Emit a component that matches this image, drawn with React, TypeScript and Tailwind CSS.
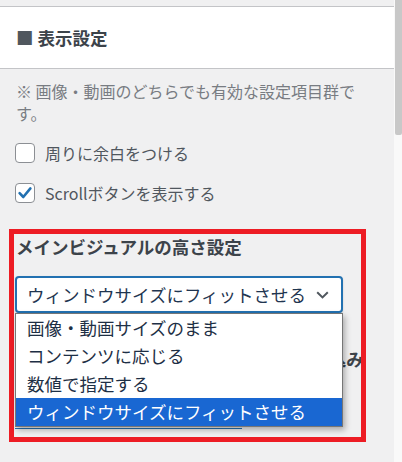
import React from "react";

const jp = "font-['Noto_Sans_CJK_JP',sans-serif]";

const options = [
  "画像・動画サイズのまま",
  "コンテンツに応じる",
  "数値で指定する",
  "ウィンドウサイズにフィットさせる",
];

const Checkbox = ({ checked, label }: { checked?: boolean; label: string }) => (
  <label className="flex items-center h-[20px]">
    <span className="w-[20px] h-[20px] ml-[15px] rounded-[4px] border border-[#8c8f94] bg-white flex items-center justify-center">
      {checked && (
        <svg width="16" height="16" viewBox="0 0 16 16">
          <path d="M2.6 8.2 L6.3 12 L13.4 3.4" fill="none" stroke="#2271b1" strokeWidth="2.6" strokeLinecap="round" strokeLinejoin="round" />
        </svg>
      )}
    </span>
    <span className="ml-[10px] text-[16px] text-[#50575e] leading-[20px]">{label}</span>
  </label>
);

export default function App() {
  const selected = 3;

  return (
    <div className={`w-[402px] h-[462px] bg-[#f0f0f1] flex overflow-hidden ${jp}`}>
      <div className="w-[394px] shrink-0">
        <div className="h-[6px]" />
        <div className="h-[63px] bg-white border-y border-[#c3c4c7] flex items-center pl-[16px]">
          <h2 className="text-[17.5px] font-bold text-[#3c434a] leading-[26px]">
            <span className="text-[#50575e]">■</span> 表示設定
          </h2>
        </div>

        <p className="mt-[11px] ml-[16px] w-[350px] text-[16px] leading-[22px] text-[#787c82]">
          ※ 画像・動画のどちらでも有効な設定項目群です。
        </p>

        <div className="mt-[19px] flex flex-col gap-[20px]">
          <Checkbox label="周りに余白をつける" />
          <Checkbox checked label="Scrollボタンを表示する" />
        </div>

        {/* 赤枠 */}
        <div className="mt-[26px] ml-[9px] w-[357px] border-[5px] border-[#ed1c24] pl-[1px] pb-[8px]">
          <h3 className="pl-[1px] text-[17.5px] font-bold text-[#3c434a] leading-[26px]">
            メインビジュアルの高さ設定
          </h3>

          <div className="relative mt-[16px] w-[328px]">
            <div className="h-[37px] rounded-[4px] border-2 border-[#2271b1] bg-white shadow-[0_1px_2px_rgba(0,0,0,0.15)] flex items-center pl-[10px] pr-[10px]">
              <span className="grow text-[17.5px] text-[#1f3550] leading-[24px] whitespace-nowrap">
                {options[selected]}
              </span>
              <svg width="13" height="8" viewBox="0 0 13 8" className="mr-[2px]">
                <path d="M1.2 1.2 L6.5 6.4 L11.8 1.2" fill="none" stroke="#50575e" strokeWidth="2" />
              </svg>
            </div>

            {/* 開いたドロップダウン */}
            <ul className="absolute z-10 left-0 top-[37px] w-[328px] bg-white border border-[#767676] shadow-[2px_3px_6px_rgba(0,0,0,0.3)]">
              {options.map((o, i) => (
                <li
                  key={o}
                  className={
                    i === selected
                      ? "h-[28px] pl-[11px] flex items-center text-[17.5px] text-white bg-[#1967d2] whitespace-nowrap"
                      : "h-[28px] pl-[11px] flex items-center text-[17.5px] text-[#1e2f45] whitespace-nowrap"
                  }
                >
                  {o}
                </li>
              ))}
            </ul>
          </div>

          <div className="mt-[33px] pl-[1px] h-[26px] text-[17.5px] font-bold text-[#3c434a] leading-[26px] whitespace-nowrap overflow-hidden">
            スマホでのメインビジュアル画像の読み込み
          </div>
          <div className="mt-[15px] w-[227px] h-[42px] border-b border-[#2271b1]" />
        </div>
      </div>

      <div className="w-[8px] shrink-0 bg-[#f9f9f9]">
        <div className="ml-[1px] w-[7px] h-[135px] bg-[#c8c8c8] rounded-b-[2px]" />
      </div>
    </div>
  );
}
